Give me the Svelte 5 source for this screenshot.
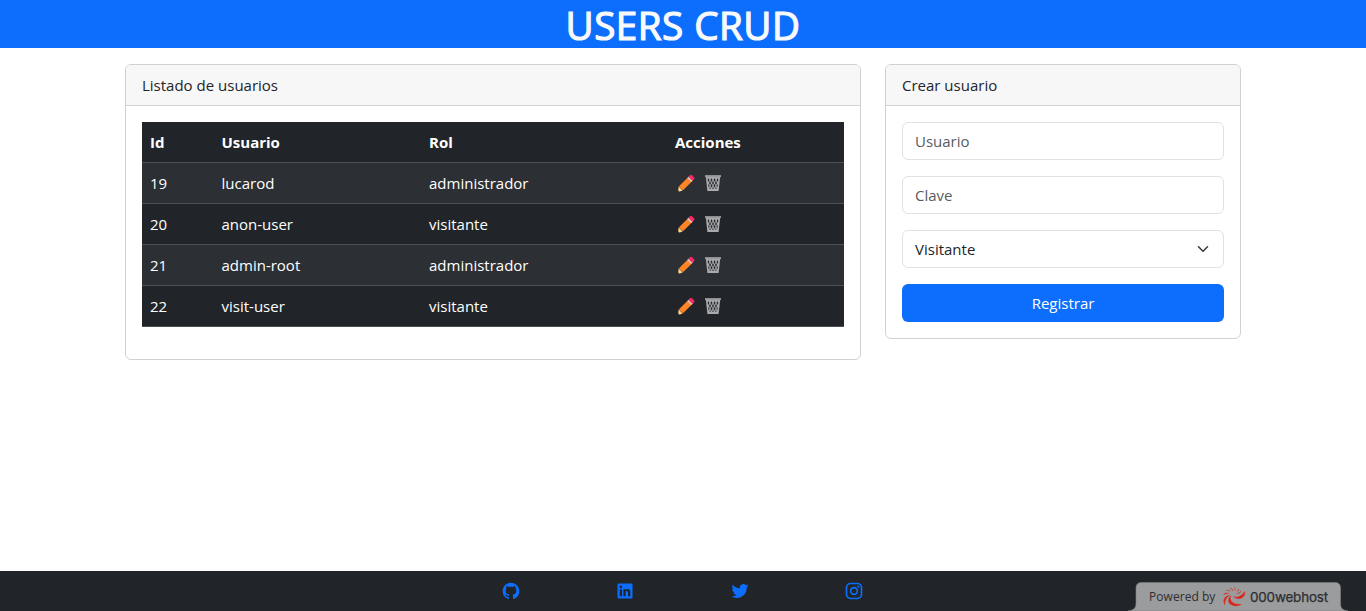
<script>
  const users = [
    { id: 19, name: 'lucarod', role: 'administrador' },
    { id: 20, name: 'anon-user', role: 'visitante' },
    { id: 21, name: 'admin-root', role: 'administrador' },
    { id: 22, name: 'visit-user', role: 'visitante' }
  ];
</script>

<div class="page">
  <header><h1>USERS CRUD</h1></header>

  <main>
    <section class="card list">
      <div class="card-header">Listado de usuarios</div>
      <div class="card-body">
        <table>
          <colgroup><col class="c1" /><col class="c2" /><col class="c3" /><col /></colgroup>
          <thead>
            <tr><th>Id</th><th>Usuario</th><th>Rol</th><th>Acciones</th></tr>
          </thead>
          <tbody>
            {#each users as u}
              <tr>
                <td>{u.id}</td>
                <td>{u.name}</td>
                <td>{u.role}</td>
                <td>
                  <div class="actions">
                    <svg width="18" height="18" viewBox="0 0 18 18" aria-label="Editar">
                      <path d="M1.600 12.600 5.600 16.400 2.600 17.400Q1.200 17.600 1.300 16Z" fill="#ffd687" />
                      <path d="M2 12.200 10.800 3.600 14.900 7.600 6 16.200Q5.200 16 5 15.100 3.900 15 3.600 13.900 2.300 13.600 2 12.200Z" fill="#ff8426" />
                      <path d="M10.300 4.100 12.200 2.300 16.200 6.200 14.300 8.100Z" fill="#cfd0d5" />
                      <path d="M11.400 3 13.200 1.200Q14 .5 14.900 1.200L17.200 3.500Q17.900 4.300 17.200 5.100L15.400 6.900Z" fill="#fb2960" />
                    </svg>
                    <svg width="18" height="18" viewBox="0 0 18 18" aria-label="Eliminar">
                      <path d="M1.800 2.400H16.200L14.600 17H3.400Z" fill="#aaaaad" />
                      <path d="M1 1.100H17V3.100H1Z" fill="#9b9b9d" />
                      <g fill="#2b2d31">
                        <path d="M4.400 4.100 5.400 6 4.400 7.900 3.600 6ZM7.500 4.100 8.500 6 7.500 7.900 6.500 6ZM10.600 4.100 11.600 6 10.600 7.900 9.600 6ZM13.600 4.100 14.400 6 13.600 7.900 12.600 6Z" />
                        <path d="M6 6.800 7 8.900 6 11 5 8.900ZM9 6.800 10 8.900 9 11 8 8.900ZM12 6.800 13 8.900 12 11 11 8.900Z" />
                        <path d="M4.700 9.800 5.500 11.800 4.900 13.600 4.200 11.800ZM7.500 9.800 8.500 11.800 7.500 13.800 6.500 11.800ZM10.500 9.800 11.500 11.800 10.500 13.800 9.500 11.800ZM13.300 9.800 13.800 11.800 13.100 13.600 12.500 11.800Z" />
                        <path d="M6 12.800 6.900 14.800H5.400ZM9 12.800 9.900 14.800H8.100ZM12 12.800 12.600 14.800H11.100Z" />
                      </g>
                    </svg>
                  </div>
                </td>
              </tr>
            {/each}
          </tbody>
        </table>
      </div>
    </section>

    <section class="card create">
      <div class="card-header">Crear usuario</div>
      <form class="card-body">
        <input type="text" placeholder="Usuario" />
        <input type="password" placeholder="Clave" />
        <div class="select">
          <span>Visitante</span>
          <svg width="16" height="12" viewBox="0 0 16 16">
            <path d="m2 5 6 6 6-6" fill="none" stroke="#343a40" stroke-width="2" stroke-linecap="round" stroke-linejoin="round" />
          </svg>
        </div>
        <button type="button">Registrar</button>
      </form>
    </section>
  </main>

  <footer>
    <svg viewBox="0 0 24 24"><path d="M12 2C6.475 2 2 6.475 2 12a9.994 9.994 0 0 0 6.838 9.488c.5.087.687-.213.687-.476 0-.237-.013-1.024-.013-1.862-2.512.463-3.162-.612-3.362-1.175-.113-.288-.6-1.175-1.025-1.413-.35-.187-.85-.65-.013-.662.788-.013 1.350.725 1.538 1.025.9 1.512 2.338 1.087 2.912.825.088-.65.350-1.087.638-1.337-2.225-.25-4.550-1.113-4.550-4.938 0-1.088.387-1.987 1.025-2.688-.1-.25-.45-1.275.1-2.650 0 0 .837-.262 2.750 1.026a9.280 9.280 0 0 1 2.500-.338c.85 0 1.700.112 2.500.337 1.912-1.300 2.750-1.024 2.750-1.024.55 1.375.2 2.400.1 2.650.637.7 1.025 1.587 1.025 2.687 0 3.838-2.337 4.688-4.562 4.938.362.312.675.912.675 1.850 0 1.337-.013 2.412-.013 2.750 0 .262.188.574.688.474A10.016 10.016 0 0 0 22 12c0-5.525-4.475-10-10-10z" /></svg>
    <svg viewBox="0 0 24 24"><path d="M18.335 18.339H15.670v-4.177c0-.996-.02-2.278-1.390-2.278-1.389 0-1.601 1.084-1.601 2.205v4.250h-2.666V9.750h2.560v1.170h.035c.358-.674 1.228-1.387 2.528-1.387 2.700 0 3.200 1.778 3.200 4.091v4.715zM7.003 8.575a1.546 1.546 0 0 1-1.548-1.549 1.548 1.548 0 1 1 1.547 1.549zm1.336 9.764H5.666V9.750H8.340v8.589zM19.670 3H4.329C3.593 3 3 3.580 3 4.297v15.406C3 20.420 3.594 21 4.328 21h15.338C20.400 21 21 20.420 21 19.703V4.297C21 3.580 20.400 3 19.666 3h.003z" /></svg>
    <svg viewBox="0 0 24 24"><path d="M22.162 5.656a8.384 8.384 0 0 1-2.402.658A4.196 4.196 0 0 0 21.600 4c-.82.488-1.719.83-2.656 1.015a4.182 4.182 0 0 0-7.126 3.814 11.874 11.874 0 0 1-8.620-4.370 4.168 4.168 0 0 0-.566 2.103c0 1.450.738 2.731 1.860 3.481a4.168 4.168 0 0 1-1.894-.523v.052a4.185 4.185 0 0 0 3.355 4.101 4.210 4.210 0 0 1-1.890.072A4.185 4.185 0 0 0 7.970 16.650a8.394 8.394 0 0 1-6.191 1.732 11.830 11.830 0 0 0 6.410 1.880c7.693 0 11.900-6.373 11.900-11.900 0-.18-.005-.362-.013-.54a8.496 8.496 0 0 0 2.087-2.165z" /></svg>
    <svg viewBox="0 0 24 24">
      <rect x="3" y="3" width="18" height="18" rx="5" fill="none" stroke="#0d6efd" stroke-width="2" />
      <circle cx="12" cy="12" r="4" fill="none" stroke="#0d6efd" stroke-width="2" />
      <circle cx="17.250" cy="6.750" r="1.250" />
    </svg>
  </footer>

  <div class="badge">
    <svg class="tab" width="220" height="29" viewBox="0 0 220 29">
      <path d="M0 29C5 28 8 27 8 21V6Q8 .5 13.500 .5H207Q212.500 .5 212.500 6V21C212.500 27 215 28 220 29Z" fill="#9b9c9d" stroke="#7d8082" stroke-width=".6" />
    </svg>
    <div class="badge-content">
      <span class="powered">Powered by</span>
      <svg width="24" height="21" viewBox="0 0 24 21" fill="#dc2418" stroke="#dc2418" stroke-width=".45" stroke-linejoin="round">
        <path d="M8.800 9.800Q7.200 13.500 10 16.200 13 18.800 19.200 18.500 13.500 21.300 8.900 18.600 4 14.800 8.800 9.800Z" />
        <path d="M11.500 10.600Q14.500 12 18 10.200 21.400 8.400 22.600 5.600 23.400 10.300 19 12.300 14.500 13.700 11.500 10.600Z" />
        <path d="M7.600 9.300Q2.900 11.800 2.600 18.600 -.4 11 7.600 9.300Z" />
        <path d="M7.900 7.700Q4.400 6.700 1 9 3.600 5.200 7.900 7.700ZM9 6.300Q6.800 4 3.600 4.300 7.200 2.500 9 6.300ZM10.800 5.500Q10.100 3.200 7.900 2 11.300 2.100 10.800 5.500ZM12.500 5Q13.300 3 12.300 1 14.600 3 12.500 5ZM14.200 5.700Q16.200 4.800 16.700 2.600 17.700 5.300 14.200 5.700Z" stroke="none" />
        <path d="M13.500 7.400Q17.400 7.600 19.300 4.600 18.500 8.800 13.500 7.400Z" stroke="none" />
      </svg>
      <span class="host">000webhost</span>
    </div>
  </div>
</div>

<style>
  :global(body) { margin: 0; background: #fff; }
  .page {
    display: flex;
    flex-direction: column;
    height: 611px;
    overflow: hidden;
    position: relative;
    box-sizing: border-box;
    color: #212529;
    font: 400 15px/24px "Open Sans", sans-serif;
  }
  .page *, .page *::before { box-sizing: border-box; }
  header { height: 48px; background: #0d6efd; text-align: center; }
  h1 {
    margin: 0;
    color: #f8f9fa;
    font: 500 38.6px/50px "Open Sans", sans-serif;
    letter-spacing: 0.5px;
    -webkit-text-stroke: 1.2px #f8f9fa;
  }
  main {
    display: grid;
    grid-template-columns: 736px 356px;
    column-gap: 24px;
    align-items: start;
    flex: 1;
    padding: 16px 125px;
  }
  .card { border: 1px solid #d0d1d2; border-radius: 6px; background: #fff; }
  .card-header {
    height: 41px;
    padding: 8px 16px;
    background: #f7f7f7;
    border-bottom: 1px solid #d0d1d2;
    border-radius: 5px 5px 0 0;
  }
  .card-body { padding: 16px; }
  .list { height: 296px; }
  table {
    width: 702px;
    table-layout: fixed;
    border-collapse: separate;
    border-spacing: 0;
    color: #fff;
  }
  .c1 { width: 71.500px; }
  .c2 { width: 207.500px; }
  .c3 { width: 246px; }
  th, td {
    height: 41px;
    padding: 8px;
    border-bottom: 1px solid #4d5154;
    background: #212529;
    text-align: left;
  }
  th { font-weight: 700; }
  tbody tr:nth-child(odd) td { background: #2c3034; }
  .actions { display: flex; align-items: center; gap: 9px; height: 24px; padding-left: 1.5px; }
  form { display: flex; flex-direction: column; gap: 16px; }
  input, .select {
    width: 100%;
    height: 38px;
    padding: 6px 12px;
    border: 1px solid #dee2e6;
    border-radius: 6px;
    background: #fff;
    color: #212529;
    font: inherit;
  }
  input::placeholder { color: #595c5f; opacity: 1; }
  .select { display: flex; justify-content: space-between; align-items: center; }
  button {
    height: 38px;
    padding: 6px 12px;
    border: 0;
    border-radius: 6px;
    background: #0d6efd;
    color: #fff;
    font: inherit;
  }
  footer {
    display: flex;
    justify-content: center;
    align-items: center;
    gap: 94.500px;
    height: 40px;
    padding-right: 1px;
    background: #212529;
  }
  footer svg { width: 20px; height: 20px; fill: #0d6efd; }
  .badge { position: absolute; left: 1128px; bottom: 0; width: 220px; height: 29px; }
  .tab { position: absolute; inset: 0; }
  .badge-content {
    position: relative;
    display: flex;
    align-items: center;
    height: 29px;
    padding-left: 21px;
    color: #2c2e30;
    white-space: nowrap;
  }
  .powered { width: 73px; font-size: 12px; letter-spacing: 0.05px; }
  .host {
    margin-left: 4px;
    font: 400 13.4px/24px Inter, sans-serif;
    letter-spacing: -0.15px;
    -webkit-text-stroke: 0.25px #2c2e30;
  }
</style>
